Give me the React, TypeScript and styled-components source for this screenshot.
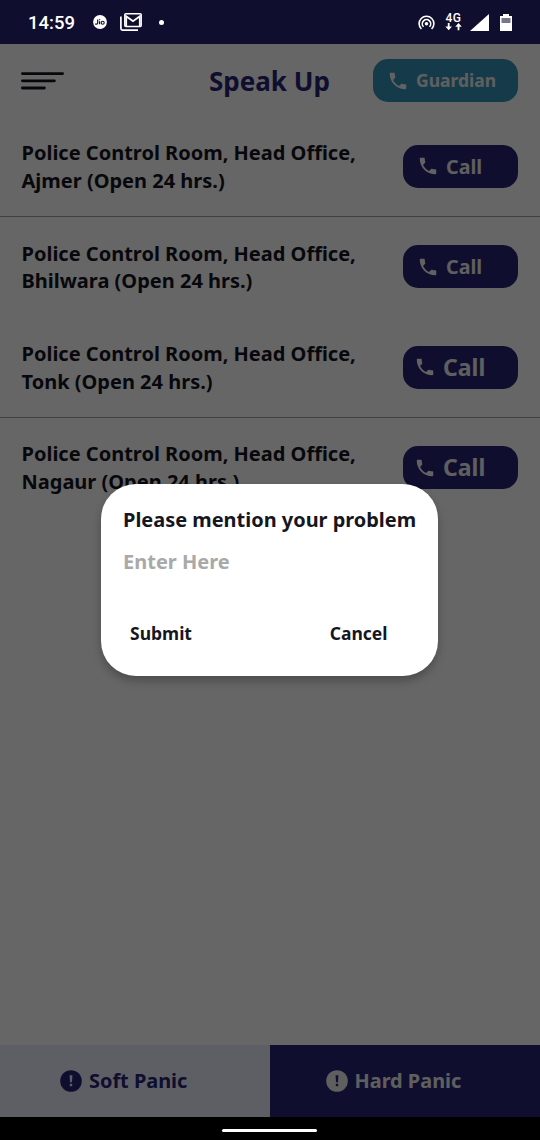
import React from 'react';
import styled, { createGlobalStyle } from 'styled-components';

const GlobalStyle = createGlobalStyle`
  * { box-sizing: border-box; }
  body { margin: 0; background: #000; }
  button, input { font: inherit; letter-spacing: inherit; border: 0; background: none; padding: 0; color: inherit; }
`;

const navy = '#262376';

const Screen = styled.div`
  position: relative;
  width: 540px;
  height: 1140px;
  display: flex;
  flex-direction: column;
  overflow: hidden;
  background: #fff;
  font-family: 'Noto Sans', 'Open Sans', sans-serif;
  font-weight: 700;
  color: #15161e;
`;

const StatusBar = styled.div`
  position: relative;
  z-index: 2;
  display: flex;
  align-items: center;
  height: 44px;
  padding: 0 28px 0 28px;
  background: #0f0e2f;
  color: #fff;
  font-family: Roboto, sans-serif;
  flex: none;
`;

const Clock = styled.span`
  width: 65px;
  font-size: 18.5px;
  font-weight: 500;
  line-height: 44px;
  padding-top: 2px;
`;

const StatusGroup = styled.div<{ $end?: boolean }>`
  display: flex;
  align-items: center;
  height: 44px;
  margin-left: ${(p) => (p.$end ? 'auto' : '0')};
`;

const Header = styled.header`
  display: flex;
  align-items: center;
  height: 73px;
  padding: 0 22px 0 21px;
  flex: none;
`;

const MenuIcon = styled.svg`
  display: block;
  margin-right: 145px;
`;

const Title = styled.h1`
  margin: 0;
  width: 164px;
  color: ${navy};
  font-size: 26px;
  line-height: 36px;
  font-weight: 700;
  white-space: nowrap;
`;

const PillButton = styled.button<{ $width: number; $color: string; $size: number; $inset: number }>`
  && {
    display: flex;
    align-items: center;
    flex: none;
    gap: 7px;
    width: ${(p) => p.$width}px;
    height: 43px;
    padding-left: ${(p) => p.$inset}px;
    border-radius: 15px;
    background: ${(p) => p.$color};
    color: #eee;
    font-size: ${(p) => p.$size}px;
    line-height: 43px;
    white-space: nowrap;
  }
`;

const List = styled.main`
  flex: 1;
  min-height: 0;
`;

const Row = styled.div<{ $line?: boolean }>`
  display: flex;
  justify-content: space-between;
  height: 100.4px;
  padding: 22px 22px 0 21.5px;
  border-bottom: 1px solid ${(p) => (p.$line ? '#a0a0a0' : 'transparent')};
`;

const Station = styled.p`
  margin: 0;
  padding-top: 0.3px;
  font-size: 20px;
  line-height: 27.5px;
  white-space: pre-line;
`;

const CallSlot = styled.div`
  padding-top: 5.9px;
`;

const PanicBar = styled.footer`
  display: flex;
  height: 72px;
  flex: none;
`;

const PanicButton = styled.button<{ $hard?: boolean }>`
  && {
    display: flex;
    flex: none;
    width: 50%;
    align-items: center;
    gap: 7px;
    padding-left: ${(p) => (p.$hard ? 55.5 : 60)}px;
    background: ${(p) => (p.$hard ? navy : '#e9edfb')};
    color: ${(p) => (p.$hard ? '#eee' : navy)};
    font-size: 19.9px;
    white-space: nowrap;
  }
`;

const PanicLabel = styled.span`
  padding-bottom: 2px;
`;

const NavBar = styled.div`
  position: relative;
  z-index: 2;
  display: flex;
  justify-content: center;
  align-items: center;
  height: 23px;
  padding: 4px 1px 0 0;
  background: #000;
  flex: none;
`;

const HomeHandle = styled.span`
  width: 95px;
  height: 3px;
  border-radius: 2px;
  background: #fff;
`;

const Scrim = styled.div`
  position: absolute;
  inset: 0;
  z-index: 1;
  display: flex;
  justify-content: center;
  align-items: flex-start;
  padding: 484px 1px 0 0;
  background: rgba(0, 0, 0, 0.6);
`;

const Dialog = styled.section`
  width: 337px;
  height: 192px;
  padding: 21px 22px 0;
  border-radius: 35px;
  background: #fff;
  box-shadow: 0 5px 9px rgba(0, 0, 0, 0.25);
`;

const DialogTitle = styled.h2`
  margin: 0;
  font-size: 19.95px;
  line-height: 30px;
  font-weight: 700;
  white-space: nowrap;
`;

const ProblemInput = styled.input`
  && {
    display: block;
    width: 100%;
    height: 30px;
    margin-top: 12px;
    font-size: 20px;
    line-height: 30px;
    outline: none;
  }
  &::placeholder { color: #a9a9a9; opacity: 1; }
`;

const DialogActions = styled.div`
  display: flex;
  justify-content: space-between;
  margin-top: 41px;
  padding: 0 28.5px 0 7px;
  font-size: 17.5px;
  line-height: 31px;
`;

const Phone = () => (
  <svg width="22" height="22" viewBox="0 0 24 24" fill="#f4f4f4">
    <path d="M6.62 10.79c1.44 2.83 3.76 5.14 6.59 6.59l2.2-2.2c.27-.27.67-.36 1.02-.24 1.12.37 2.33.57 3.57.57.55 0 1 .45 1 1V20c0 .55-.45 1-1 1-9.39 0-17-7.61-17-17 0-.55.45-1 1-1h3.5c.55 0 1 .45 1 1 0 1.25.2 2.45.57 3.57.11.35.03.74-.25 1.02l-2.2 2.2z" />
  </svg>
);

const Alert = ({ disc, mark }: { disc: string; mark: string }) => (
  <svg width="22" height="22" viewBox="0 0 22 22">
    <circle cx="11" cy="11" r="10.8" fill={disc} />
    <path d="M9.6 5.2h2.8l-.4 7h-2z" fill={mark} />
    <rect x="9.8" y="13.8" width="2.4" height="2.4" fill={mark} />
  </svg>
);

const JioIcon = () => (
  <svg width="14" height="14" viewBox="0 0 14 14">
    <circle cx="7" cy="7" r="6.9" fill="#fff" />
    <path d="M4.7 4.6v3.4q0 1.1-1.1 1.1H2.2M6.6 6.2v3.1M6.6 4.2v1" fill="none" stroke="#0f0e2f" strokeWidth="1.2" />
    <circle cx="9.7" cy="7.7" r="1.5" fill="none" stroke="#0f0e2f" strokeWidth="1.1" />
  </svg>
);

const MailIcon = () => (
  <svg width="22" height="18" viewBox="0 0 22 18" fill="none" stroke="#fff">
    <path d="M.9 3.5v12q0 1.6 1.6 1.6H18" strokeWidth="1.7" />
    <rect x="4.8" y=".8" width="16.4" height="12.8" rx="1" strokeWidth="1.5" />
    <path d="M6.2 13.5V3.2l6.8 5 6.8-5v10.3" strokeWidth="1.8" />
  </svg>
);

const HotspotIcon = () => (
  <svg width="17" height="15" viewBox="0 0 17 15" fill="none" stroke="#fff" strokeWidth="1.6">
    <path d="M3.4 14A7.4 7.4 0 1 1 13.6 14" />
    <path d="M5.5 11.8a4.2 4.2 0 1 1 6 0" />
    <circle cx="8.5" cy="8.8" r="1.8" fill="#fff" stroke="none" />
  </svg>
);

const Network = styled.span`
  display: flex;
  flex-direction: column;
  align-items: center;
  width: 17px;
  margin: 0 8px 0 10px;
  font-size: 12px;
  line-height: 10px;
  font-weight: 500;
  letter-spacing: 0.5px;
`;

const Dot = styled.span`
  width: 5px;
  height: 5px;
  margin-left: 17px;
  border-radius: 50%;
  background: #fff;
`;

const MailSlot = styled.span`
  display: flex;
  margin-left: 13px;
`;

const SignalSlot = styled.span`
  display: flex;
  margin-right: 11px;
`;

const stations = [
  { town: 'Ajmer', size: 19.7, inset: 14, line: true },
  { town: 'Bhilwara', size: 19.7, inset: 14, line: false },
  { town: 'Tonk', size: 23, inset: 11, line: true },
  { town: 'Nagaur', size: 23, inset: 11, line: false },
];

export default function App() {
  return (
    <Screen>
      <GlobalStyle />
      <StatusBar>
        <Clock>14:59</Clock>
        <StatusGroup>
          <JioIcon />
          <MailSlot><MailIcon /></MailSlot>
          <Dot />
        </StatusGroup>
        <StatusGroup $end>
          <HotspotIcon />
          <Network>
            4G
            <svg width="17" height="8" viewBox="0 0 17 8" fill="#fff">
              <path d="M2.8 0h1.8v3.5H7L3.7 7.3.4 3.5h2.4zM12.6 7.3h1.8V3.8h2.4L13.5 0l-3.3 3.8h2.4z" />
            </svg>
          </Network>
          <SignalSlot>
            <svg width="19" height="17" viewBox="0 0 19 17"><path d="M19 0v17H0z" fill="#fff" /></svg>
          </SignalSlot>
          <svg width="12" height="17" viewBox="0 0 12 17">
            <path d="M3 0h6v2h3v15H0V2h3z" fill="#fff" />
            <path d="M1.5 4h9v5h-9z" fill="#77768d" />
          </svg>
        </StatusGroup>
      </StatusBar>
      <Header>
        <MenuIcon width="43" height="18" viewBox="0 0 43 18" fill="none" stroke="#15161e" strokeWidth="2.8" strokeLinecap="round">
          <path d="M1.4 1.6h40.2M1.4 8.8h32M1.4 16h22" />
        </MenuIcon>
        <Title>Speak Up</Title>
        <PillButton $width={145} $color="#3592b9" $size={17.5} $inset={14}>
          <Phone />Guardian
        </PillButton>
      </Header>
      <List>
        {stations.map((s) => (
          <Row key={s.town} $line={s.line}>
            <Station>{`Police Control Room, Head Office,\n${s.town} (Open 24 hrs.)`}</Station>
            <CallSlot>
              <PillButton $width={115} $color={navy} $size={s.size} $inset={s.inset}>
                <Phone />Call
              </PillButton>
            </CallSlot>
          </Row>
        ))}
      </List>
      <PanicBar>
        <PanicButton><Alert disc={navy} mark="#e9edfb" /><PanicLabel>Soft Panic</PanicLabel></PanicButton>
        <PanicButton $hard><Alert disc="#eee" mark={navy} /><PanicLabel>Hard Panic</PanicLabel></PanicButton>
      </PanicBar>
      <NavBar><HomeHandle /></NavBar>
      <Scrim>
        <Dialog role="dialog">
          <DialogTitle>Please mention your problem</DialogTitle>
          <ProblemInput placeholder="Enter Here" />
          <DialogActions>
            <button>Submit</button>
            <button>Cancel</button>
          </DialogActions>
        </Dialog>
      </Scrim>
    </Screen>
  );
}
